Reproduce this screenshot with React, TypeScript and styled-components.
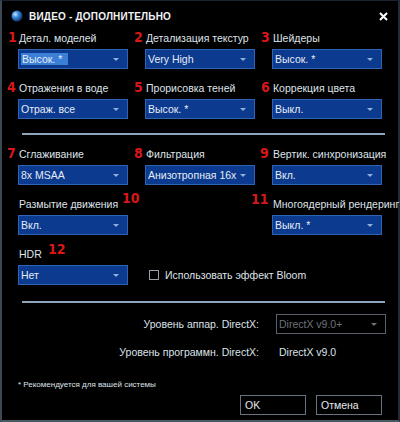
import React from "react";
import styled, { createGlobalStyle, css } from "styled-components";

const Global = createGlobalStyle`
  html, body { margin: 0; padding: 0; background: #000; }
  * { box-sizing: border-box; }
`;

const Dialog = styled.div`
  width: 400px;
  height: 422px;
  background: #000;
  border-left: 2px solid #3c4854;
  border-right: 2px solid #222c38;
  border-bottom: 2px solid #4a5866;
  border-top: 1px solid #1a2230;
  font-family: "Liberation Sans", Arial, sans-serif;
  color: #dde2ea;
  display: flex;
  flex-direction: column;
`;

const TitleBar = styled.div`
  height: 30px;
  display: flex;
  align-items: center;
  padding: 0 10px 0 9px;
  gap: 6px;
`;

const Title = styled.div`
  flex: 1;
  font-weight: bold;
  font-size: 10px;
  letter-spacing: 0.2px;
  color: #f0f2f6;
`;

const Body = styled.div`
  padding: 0 15px 0 16px;
  display: flex;
  flex-direction: column;
`;

const Grid = styled.div`
  display: grid;
  grid-template-columns: 110px 110px 110px;
  column-gap: 17px;
  row-gap: 12px;
`;

const Field = styled.div`
  position: relative;
  display: flex;
  flex-direction: column;
  gap: 4px;
`;

const Label = styled.div`
  height: 14px;
  line-height: 14px;
  font-size: 10.5px;
  padding-left: 1px;
  white-space: nowrap;
  color: #dfe3ea;
`;

const Num = styled.span<{ $left: number; $top?: number }>`
  position: absolute;
  left: ${(p) => p.$left}px;
  top: ${(p) => p.$top ?? -2}px;
  color: #d81818;
  font-family: "DejaVu Sans Condensed", "DejaVu Sans", sans-serif;
  font-weight: bold;
  font-size: 14px;
  line-height: 16px;
`;

const SelectBox = styled.div<{ $disabled?: boolean }>`
  height: 20px;
  display: flex;
  align-items: center;
  padding: 0 8px 0 2px;
  font-size: 10.5px;
  ${(p) =>
    p.$disabled
      ? css`
          background: #000;
          border: 1px solid #59606a;
          color: #6c7078;
        `
      : css`
          background: #0b3a8e;
          border: 1px solid #2f63b4;
          color: #e6ecf6;
        `}
`;

const Value = styled.span<{ $sel?: boolean }>`
  flex: 1;
  white-space: nowrap;
  overflow: hidden;
  span {
    ${(p) =>
      p.$sel &&
      css`
        background: #3b7fd6;
        padding: 3px 6px 3px 1px;
      `}
  }
`;

const Arrow = styled.span<{ $disabled?: boolean }>`
  flex-shrink: 0;
  width: 0;
  height: 0;
  border-left: 3px solid transparent;
  border-right: 3px solid transparent;
  border-top: 3px solid ${(p) => (p.$disabled ? "#6c7078" : "#8fb0dc")};
`;

const Separator = styled.div<{ $top: number; $bottom: number }>`
  height: 2px;
  background: #8ea4bc;
  margin: ${(p) => p.$top}px 0 ${(p) => p.$bottom}px 4px;
  width: 363px;
`;

const CheckRow = styled.label`
  display: flex;
  align-items: center;
  gap: 6px;
  align-self: end;
  height: 20px;
  font-size: 10.5px;
  white-space: nowrap;
  color: #dfe3ea;
  margin-left: 4px;
`;

const Check = styled.span`
  flex-shrink: 0;
  width: 10px;
  height: 10px;
  border: 1px solid #9aa0a8;
`;

const DxRow = styled.div<{ $gap?: number }>`
  display: grid;
  grid-template-columns: 241px 110px;
  column-gap: 17px;
  align-items: center;
  height: 20px;
  font-size: 10.5px;
  margin-top: ${(p) => p.$gap ?? 0}px;
`;

const DxLabel = styled.div`
  text-align: right;
  white-space: nowrap;
`;

const DxValue = styled.div`
  padding-left: 3px;
`;

const Footnote = styled.div`
  font-size: 8px;
  margin: 17px 0 0 0;
  height: 12px;
  line-height: 12px;
`;

const Buttons = styled.div`
  display: flex;
  justify-content: flex-end;
  gap: 10px;
  margin-top: 4px;
  padding-right: 1px;
`;

const Button = styled.button`
  width: 66px;
  height: 20px;
  background: #000;
  border: 1px solid #6a7280;
  color: #e6e9ee;
  font-family: "Liberation Sans", Arial, sans-serif;
  font-size: 10.5px;
  text-align: left;
  padding: 0 4px;
`;

const Globe = () => (
  <svg width="12" height="12" viewBox="0 0 12 12">
    <defs>
      <radialGradient id="g" cx="0.35" cy="0.35" r="0.7">
        <stop offset="0" stopColor="#cfe6ff" />
        <stop offset="0.4" stopColor="#3a8ee0" />
        <stop offset="1" stopColor="#0c2f66" />
      </radialGradient>
    </defs>
    <circle cx="6" cy="6" r="5.5" fill="url(#g)" />
  </svg>
);

const Close = () => (
  <svg width="9" height="9" viewBox="0 0 9 9">
    <path d="M1 1L8 8M8 1L1 8" stroke="#fff" strokeWidth="2" />
  </svg>
);

type SelProps = { value: string; sel?: boolean; disabled?: boolean };
const Select = ({ value, sel, disabled }: SelProps) => (
  <SelectBox $disabled={disabled}>
    <Value $sel={sel}>
      <span>{value}</span>
    </Value>
    <Arrow $disabled={disabled} />
  </SelectBox>
);

type F = {
  label: string;
  value: string;
  num: string;
  numLeft: number;
  numTop?: number;
  sel?: boolean;
};

const Fld = ({ label, value, num, numLeft, numTop, sel }: F) => (
  <Field>
    <Num $left={numLeft} $top={numTop}>
      {num}
    </Num>
    <Label>{label}</Label>
    <Select value={value} sel={sel} />
  </Field>
);

export default function App() {
  return (
    <>
      <Global />
      <Dialog>
        <TitleBar>
          <Globe />
          <Title>ВИДЕО - ДОПОЛНИТЕЛЬНО</Title>
          <Close />
        </TitleBar>
        <Body>
          <Grid>
            <Fld label="Детал. моделей" value="Высок. *" num="1" numLeft={-10} sel />
            <Fld label="Детализация текстур" value="Very High" num="2" numLeft={-11} />
            <Fld label="Шейдеры" value="Высок. *" num="3" numLeft={-11} />
            <Fld label="Отражения в воде" value="Отраж. все" num="4" numLeft={-11} />
            <Fld label="Прорисовка теней" value="Высок. *" num="5" numLeft={-11} />
            <Fld label="Коррекция цвета" value="Выкл." num="6" numLeft={-11} />
          </Grid>
          <Separator $top={14} $bottom={12} />
          <Grid>
            <Fld label="Сглаживание" value="8x MSAA" num="7" numLeft={-11} />
            <Fld label="Фильтрация" value="Анизотропная 16x" num="8" numLeft={-11} />
            <Fld label="Вертик. синхронизация" value="Вкл." num="9" numLeft={-12} />
            <Fld label="Размытие движения" value="Вкл." num="10" numLeft={104} numTop={-7} />
            <div />
            <Fld label="Многоядерный рендеринг" value="Выкл. *" num="11" numLeft={-21} numTop={-6} />
            <Fld label="HDR" value="Нет" num="12" numLeft={30} numTop={-6} />
            <CheckRow>
              <Check />
              Использовать эффект Bloom
            </CheckRow>
          </Grid>
          <Separator $top={16} $bottom={11} />
          <DxRow>
            <DxLabel>Уровень аппар. DirectX:</DxLabel>
            <Select value="DirectX v9.0+" disabled />
          </DxRow>
          <DxRow $gap={8}>
            <DxLabel>Уровень программн. DirectX:</DxLabel>
            <DxValue>DirectX v9.0</DxValue>
          </DxRow>
          <Footnote>* Рекомендуется для вашей системы</Footnote>
          <Buttons>
            <Button>OK</Button>
            <Button>Отмена</Button>
          </Buttons>
        </Body>
      </Dialog>
    </>
  );
}
